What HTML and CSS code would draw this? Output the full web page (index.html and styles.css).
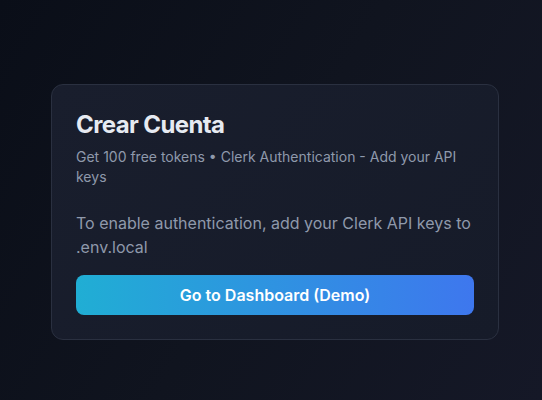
FILE: index.html
```html
<!DOCTYPE html>
<html lang="es">
<head>
<meta charset="utf-8">
<title>Crear Cuenta</title>
<link rel="stylesheet" href="styles.css">
</head>
<body>
<main class="page">
  <section class="card">
    <header class="card-header">
      <h1 class="card-title">Crear Cuenta</h1>
      <p class="card-desc">Get 100 free tokens • Clerk Authentication - Add your API keys</p>
    </header>
    <div class="card-content">
      <p class="note">To enable authentication, add your Clerk API keys to .env.local</p>
      <button class="btn" type="button">Go to Dashboard (Demo)</button>
    </div>
  </section>
</main>
</body>
</html>
```
FILE: styles.css
```css
* { box-sizing: border-box; }
html, body { margin: 0; height: 100%; }
body {
  font-family: Inter, "Noto Sans", sans-serif;
  background: linear-gradient(120deg, #0a0e18 0%, #10141f 50%, #151827 100%);
  color: #e2e8f0;
}
.page {
  min-height: 100vh;
  display: flex;
  justify-content: center;
  align-items: center;
  padding: 24px 0 0 8px;
}
.card {
  width: 448px;
  border: 1px solid #2a3040;
  border-radius: 12px;
  background: linear-gradient(135deg, #191e2d 0%, #161b29 100%);
}
.card-header {
  padding: 24px 24px 24px;
  display: flex;
  flex-direction: column;
  gap: 6px;
}
.card-title {
  margin: 0;
  font-size: 24px;
  line-height: 32px;
  font-weight: 650;
  letter-spacing: -0.6px;
  color: #e6eaf1;
}
.card-desc {
  margin: 0;
  font-size: 14px;
  line-height: 20px;
  color: #8f99ab;
}
.card-content {
  padding: 0 24px 24px;
  display: flex;
  flex-direction: column;
  gap: 16px;
}
.note {
  margin: 0;
  font-size: 16px;
  line-height: 24px;
  color: #8f99ab;
}
.btn {
  height: 40px;
  border: 0;
  border-radius: 8px;
  background: linear-gradient(90deg, #20aed4 0%, #3e77ee 100%);
  color: #ffffff;
  font-family: inherit;
  font-size: 16px;
  font-weight: 600;
  cursor: pointer;
}
```
